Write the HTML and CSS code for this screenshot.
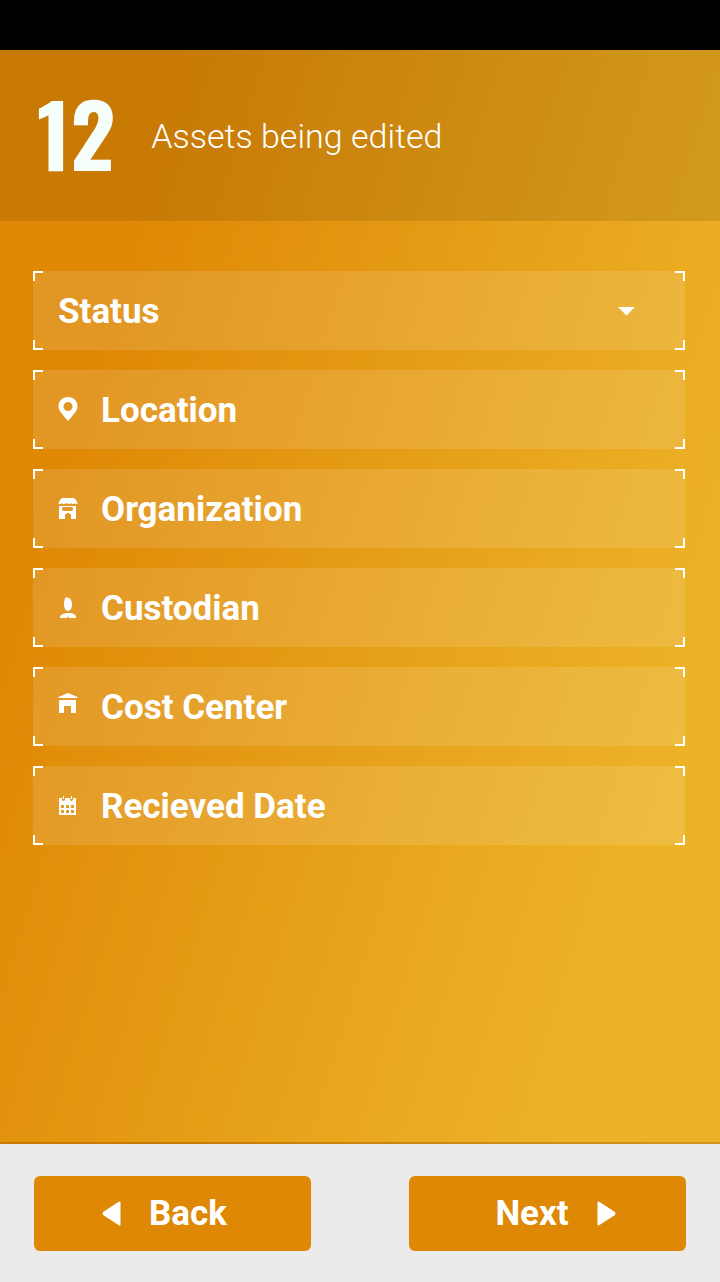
FILE: index.html
```
<!DOCTYPE html>
<html lang="en">
<head>
<meta charset="utf-8">
<meta name="viewport" content="width=device-width, initial-scale=1">
<title>Assets being edited</title>
<link rel="stylesheet" href="styles.css">
</head>
<body>
<div class="status-bar"></div>
<main class="screen">
  <header class="summary">
    <strong class="count">12</strong>
    <h1 class="title">Assets being edited</h1>
  </header>
  <form class="fields">
    <div class="field">
      <select class="select" aria-label="Status">
        <option>Status</option>
      </select>
      <svg class="caret" viewBox="0 0 17 9" aria-hidden="true"><path d="M0 0h17L8.500 8.500z"/></svg>
    </div>
    <button type="button" class="field picker">
      <svg class="icon" viewBox="0 2 20 26" aria-hidden="true"><path fill-rule="evenodd" d="M10 1C4.500 1 .5 5 .5 10c0 4 2.500 7 9.500 15 7-8 9.500-11 9.500-15C19.500 5 15.500 1 10 1zm0 5a4.500 4.500 0 1 1 0 9 4.500 4.500 0 0 1 0-9z"/></svg>
      <span>Location</span>
    </button>
    <button type="button" class="field picker">
      <svg class="icon" viewBox="0 2 20 26" aria-hidden="true"><path d="M4 3h12l2 2 1.500 3-.5 1h-1l-1-1-1 1h-2l-1-1-1 1h-1l-1-1-1 1H9L8 8 7 9H5L4 8 3 9H1L.5 8 2 5z"/><path fill-rule="evenodd" d="M1 11h17v13h-5v-4l-2-2H9l-2 2v4H1zm3 2v2l2 1h7l2-1v-2l-1-1H5z"/></svg>
      <span>Organization</span>
    </button>
    <button type="button" class="field picker">
      <svg class="icon" viewBox="0 2 20 26" aria-hidden="true"><path d="M8 3c1 0 1 1 3 1 2 1 3 3 3 7 0 3-2 6-4 6s-4-3-4-6 0-6 2-8zM8 19h5c4 1 5 2 5 5h-7l-1-2-1 2H2c0-3 2-4 6-5z"/></svg>
      <span>Custodian</span>
    </button>
    <button type="button" class="field picker">
      <svg class="icon" viewBox="0 5 20 26" aria-hidden="true"><path d="M10 3l9.500 4v1H.5V7zM1 10h17v13h-5v-7H6v7H1z"/></svg>
      <span>Cost Center</span>
    </button>
    <button type="button" class="field picker">
      <svg class="icon" viewBox="0 3 20 26" aria-hidden="true"><path fill-rule="evenodd" d="M1 7h3v2l1 1h1l1-1V7h5v2l1 1h1l1-1V7h3v17H1zm2 7v3h3v-3zm5 0v3h3v-3zm5 0v3h3v-3zM3 19v3h3v-3zm5 0v3h3v-3zm5 0v3h3v-3z"/><path d="M5 5h1v3H5zm8 0h1v3h-1z"/></svg>
      <span>Recieved Date</span>
    </button>
  </form>
</main>
<footer class="actions">
  <button type="button" class="action back">
    <svg class="arrow" viewBox="0 0 19 25" aria-hidden="true"><path d="M18.500 1.500v22q0 1.500-2 .5L1 14q-1-1.500 0-3L16.500 1q2-1 2 .5z"/></svg>
    <span>Back</span>
  </button>
  <button type="button" class="action next">
    <span>Next</span>
    <svg class="arrow" viewBox="0 0 19 25" aria-hidden="true"><path d="M.5 1.500v22q0 1.500 2 .5L18 14q1-1.500 0-3L2.500 1q-2-1-2 .5z"/></svg>
  </button>
</footer>
</body>
</html>
```
FILE: styles.css
```
* {
  box-sizing: border-box;
}

body {
  margin: 0;
  min-height: 100vh;
  display: flex;
  flex-direction: column;
  background: #ebebeb;
  color: #fff;
  font-family: Roboto, "Liberation Sans", sans-serif;
}

svg {
  fill: #fff;
  flex: none;
}

.status-bar {
  height: 50px;
  background: #000;
}

.screen {
  flex: 1;
  background: linear-gradient(107deg, #df8806 17%, #e9a81f 66%, #edb328 86%);
  border-bottom: 2px solid rgba(0, 0, 0, 0.1);
}

.summary {
  display: flex;
  align-items: center;
  gap: 36px;
  min-height: 171px;
  padding: 0 37px;
  background: rgba(0, 0, 0, 0.1);
}

.count {
  padding-bottom: 8px;
  color: #f7fffd;
  font: bold 87px/120px Oswald, "Roboto Condensed", "Liberation Sans Narrow", Roboto, sans-serif;
}

.title {
  margin: 0;
  font-size: 34px;
  line-height: 42px;
  font-weight: 300;
}

.fields {
  display: flex;
  flex-direction: column;
  gap: 20px;
  padding: 50px 35px 50px 33px;
}

/* Translucent box with an L-shaped mark in each corner */
.field {
  --mark: linear-gradient(#fff, #fff);
  position: relative;
  display: flex;
  align-items: center;
  width: 100%;
  height: 79px;
  padding: 2px 0 0;
  border: 0;
  border-radius: 0;
  color: #fff;
  font: bold 35px/42px Roboto, "Liberation Sans", sans-serif;
  text-align: left;
  background:
    var(--mark) left top / 10px 2px,
    var(--mark) left top / 2px 10px,
    var(--mark) right top / 10px 2px,
    var(--mark) right top / 2px 10px,
    var(--mark) left bottom / 10px 2px,
    var(--mark) left bottom / 2px 10px,
    var(--mark) right bottom / 10px 2px,
    var(--mark) right bottom / 2px 10px,
    rgba(255, 255, 255, 0.12);
  background-repeat: no-repeat;
}

.picker {
  gap: 23px;
  padding: 2px 25px 0;
}

.icon {
  width: 20px;
  height: 26px;
  overflow: visible;
}

.select {
  appearance: none;
  width: 100%;
  height: 100%;
  padding: 0 25px;
  border: 0;
  background: none;
  color: inherit;
  font: inherit;
}

.caret {
  position: absolute;
  right: 50px;
  width: 17px;
  height: 9px;
  pointer-events: none;
}

.actions {
  display: flex;
  gap: 98px;
  padding: 32px 34px 31px;
}

.action {
  flex: 1;
  display: flex;
  align-items: center;
  justify-content: center;
  gap: 28px;
  height: 75px;
  border: 0;
  border-radius: 6px;
  background: #df8806;
  color: #fff;
  font: bold 35px/42px Roboto, "Liberation Sans", sans-serif;
}

.back {
  padding: 0 40px 0 24px;
}

.next {
  padding: 0 24px 0 40px;
}

.arrow {
  width: 19px;
  height: 25px;
}
```
